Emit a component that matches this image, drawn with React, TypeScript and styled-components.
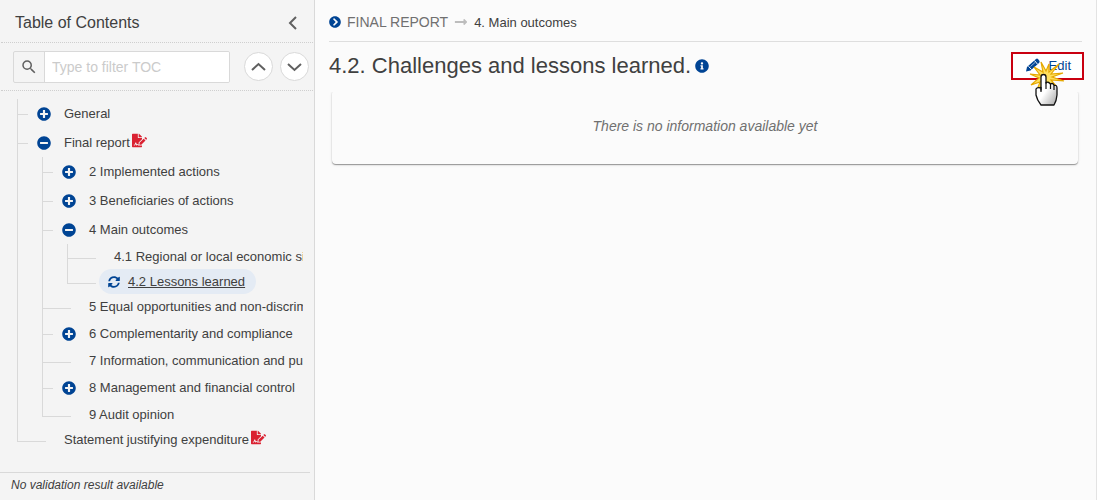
import React from "react";
import styled, { createGlobalStyle, css } from "styled-components";
import {
  FaChevronCircleRight,
  FaFileSignature,
  FaInfoCircle,
  FaLongArrowAltRight,
  FaMinusCircle,
  FaPlusCircle,
  FaSyncAlt,
} from "react-icons/fa";
import { MdSearch } from "react-icons/md";

const BLUE = "#004494";
const LINE = "#d9d9d9";

const GlobalStyle = createGlobalStyle`
  *, *::before, *::after { box-sizing: border-box; }
  body {
    margin: 0;
    background: #fbfbfb;
    color: #404040;
    font-family: "Liberation Sans", Arial, sans-serif;
    font-size: 13px;
  }
  button, input { font: inherit; color: inherit; }
  h1, h2, p, ul { margin: 0; padding: 0; font-weight: 400; }
  a { color: inherit; text-decoration: none; }
`;

const Page = styled.div`
  display: flex;
  min-height: 100vh;
  border-right: 1px solid #e3e3e3;
`;

const Sidebar = styled.aside`
  display: flex;
  flex-direction: column;
  flex: 0 0 315px;
  min-width: 0;
  background: #f4f4f4;
  border-right: 1px solid ${LINE};
`;

const SidebarHeader = styled.header`
  display: flex;
  align-items: center;
  justify-content: space-between;
  height: 43px;
  margin: 0 1px;
  padding: 4px 16px 0 14px;
  border-bottom: 1px dotted #cfcfcf;
`;

const SidebarTitle = styled.h2`
  font-size: 16px;
  line-height: 20px;
`;

const PlainButton = styled.button`
  display: flex;
  padding: 0;
  border: 0;
  background: none;
`;

const FilterBar = styled.form`
  display: flex;
  align-items: center;
  gap: 7px;
  height: 48px;
  margin: 0 1px;
  padding: 0 4px 0 12px;
  border-bottom: 1px dotted #cfcfcf;
`;

const SearchBox = styled.label`
  display: flex;
  flex: 1;
  min-width: 0;
  height: 32px;
  margin-right: 7px;
  border: 1px solid ${LINE};
  border-radius: 2px;
  overflow: hidden;
`;

const SearchIcon = styled.span`
  display: flex;
  align-items: center;
  justify-content: center;
  flex: 0 0 31px;
  border-right: 1px solid ${LINE};
  color: #606060;
`;

const SearchInput = styled.input`
  flex: 1;
  min-width: 0;
  padding: 0 7px;
  border: 0;
  background: #fff;
  font-size: 14px;
  &::placeholder { color: #cbcbcb; }
`;

const RoundButton = styled.button`
  display: flex;
  align-items: center;
  justify-content: center;
  flex: 0 0 29px;
  height: 29px;
  padding: 0;
  border: 1px solid ${LINE};
  border-radius: 50%;
  background: #fff;
`;

const TreeArea = styled.nav`
  flex: 1;
  margin-right: 11px;
  padding: 8px 0 0 17px;
  overflow: hidden;
`;

const TreeList = styled.ul<{ $nested?: boolean }>`
  list-style: none;
  margin-left: ${(p) => (p.$nested ? 24 : 0)}px;
`;

const TreeItem = styled.li`
  display: flex;
`;

const Rail = styled.span<{ $end?: number }>`
  flex: 0 0 1px;
  background: ${LINE};
  ${(p) => p.$end && css`height: ${p.$end}px;`}
`;

const ItemBody = styled.div`
  flex: 1;
  min-width: 0;
`;

const Row = styled.div<{ $leaf: boolean }>`
  display: flex;
  align-items: center;
  height: ${(p) => (p.$leaf ? 25 : 29)}px;
  white-space: nowrap;
`;

const Tick = styled.span<{ $leaf: boolean; $active: boolean }>`
  align-self: flex-start;
  flex: 0 0 ${(p) => (p.$leaf ? 28 : 10)}px;
  height: 1px;
  margin-top: ${(p) => (p.$leaf ? 14 : 15)}px;
  margin-right: ${(p) => (p.$active ? 3 : p.$leaf ? 18 : 9)}px;
  background: ${LINE};
`;

const Toggle = styled(PlainButton)`
  flex: 0 0 14px;
  margin: 1px 13px 0 0;
  color: ${BLUE};
`;

const ItemLink = styled.a<{ $active?: boolean }>`
  display: flex;
  align-items: center;
  line-height: 18px;
  ${(p) =>
    p.$active &&
    css`
      gap: 8px;
      height: 25px;
      padding: 0 11px 0 9px;
      border-radius: 13px;
      background: #e4ebf4;
      svg { color: ${BLUE}; }
      span { text-decoration: underline; }
    `}
`;

const SignMark = styled(FaFileSignature)`
  margin: 0 0 4px 2px;
  color: #da2131;
`;

const SidebarFooter = styled.footer`
  height: 28px;
  margin-right: 4px;
  padding: 0 11px;
  border-top: 1px solid ${LINE};
  font-size: 12px;
  font-style: italic;
  line-height: 25px;
`;

const Main = styled.main`
  flex: 1;
  min-width: 0;
  padding: 0 14px;
`;

const Breadcrumb = styled.nav`
  display: flex;
  align-items: center;
  gap: 6px;
  height: 42px;
  padding-top: 3px;
  border-bottom: 1px solid #dedede;
`;

const CrumbLink = styled.a`
  color: #707070;
  font-size: 14px;
`;

const TitleBar = styled.div`
  display: flex;
  align-items: center;
  justify-content: space-between;
  height: 48px;
  margin-right: -2px;
`;

const Title = styled.h1`
  display: flex;
  align-items: center;
  gap: 4px;
  font-size: 22px;
  line-height: 28px;
`;

const EditWrap = styled.div`
  position: relative;
`;

const EditButton = styled.button`
  display: flex;
  align-items: center;
  gap: 9px;
  height: 28px;
  padding: 0 11px 2px 13px;
  border: 2px solid #c90010;
  background: #fff;
  color: ${BLUE};
`;

const Pointer = styled.svg`
  position: absolute;
  left: 18px;
  top: 9px;
  pointer-events: none;
`;

const Card = styled.section`
  display: flex;
  align-items: center;
  justify-content: center;
  height: 74px;
  margin: 0 4px 0 3px;
  padding-bottom: 2px;
  border-radius: 4px;
  box-shadow: 0 1px 1px rgba(0, 0, 0, 0.35), 0 1px 3px rgba(0, 0, 0, 0.12);
  clip-path: inset(2px -4px -4px -4px);
`;

const EmptyNote = styled.p`
  color: #707070;
  font-size: 14px;
  font-style: italic;
`;

function Chevron({ d, width, height }: { d: string; width: number; height: number }) {
  return (
    <svg width={width} height={height} viewBox={`0 0 ${width} ${height}`} fill="none" stroke="#606060" strokeWidth="2" aria-hidden="true">
      <path d={d} />
    </svg>
  );
}

interface Node {
  label: string;
  children?: Node[];
  collapsed?: boolean;
  signed?: boolean;
  active?: boolean;
}

const toc: Node[] = [
  { label: "General", collapsed: true },
  {
    label: "Final report",
    signed: true,
    children: [
      { label: "2 Implemented actions", collapsed: true },
      { label: "3 Beneficiaries of actions", collapsed: true },
      {
        label: "4 Main outcomes",
        children: [
          { label: "4.1 Regional or local economic situation" },
          { label: "4.2 Lessons learned", active: true },
        ],
      },
      { label: "5 Equal opportunities and non-discrimination" },
      { label: "6 Complementarity and compliance", collapsed: true },
      { label: "7 Information, communication and publicity" },
      { label: "8 Management and financial control", collapsed: true },
      { label: "9 Audit opinion" },
    ],
  },
  { label: "Statement justifying expenditure", signed: true },
];

function Tree({ nodes, nested }: { nodes: Node[]; nested?: boolean }) {
  return (
    <TreeList $nested={nested}>
      {nodes.map((node, i) => {
        const leaf = !node.children && !node.collapsed;
        const last = i === nodes.length - 1;
        return (
          <TreeItem key={node.label}>
            <Rail $end={last ? 15 : undefined} />
            <ItemBody>
              <Row $leaf={leaf}>
                <Tick $leaf={leaf} $active={!!node.active} />
                {!leaf && (
                  <Toggle type="button" aria-label={(node.collapsed ? "Expand " : "Collapse ") + node.label}>
                    {node.collapsed ? <FaPlusCircle size={14} /> : <FaMinusCircle size={14} />}
                  </Toggle>
                )}
                <ItemLink href="#" $active={node.active}>
                  {node.active && <FaSyncAlt size={12} />}
                  <span>{node.label}</span>
                  {node.signed && <SignMark size={15} />}
                </ItemLink>
              </Row>
              {node.children && <Tree nodes={node.children} nested />}
            </ItemBody>
          </TreeItem>
        );
      })}
    </TreeList>
  );
}

function Pencil() {
  return (
    <svg width="14" height="14" viewBox="0 0 14 14" aria-hidden="true">
      <path d="M0 13.500 L1 9 L10 1 Q11 0 12 1 L13.500 3 Q14 4 13 5 L4.500 12.500 Z" fill={BLUE} />
      <path d="M8.500 2.500 L11.500 6.200 M2.500 8.300 L5.500 11.500" stroke="#fff" strokeWidth="1" />
      <path d="M4.500 8.500 L9 4.500" stroke="#8fb0d8" strokeWidth="1" />
    </svg>
  );
}

function ClickPointer() {
  return (
    <Pointer width="40" height="46" viewBox="0 0 40 46" aria-hidden="true">
      <defs>
        <linearGradient id="hand" x1="0" y1="0" x2="1" y2="1">
          <stop offset="0.5" stopColor="#fff" />
          <stop offset="1" stopColor="#a4a4a4" />
        </linearGradient>
      </defs>
      <path
        d="M14 11 L12 1 L17 10 L20 3 L20 11 L30 3 L22 13 L34 12 L23 16 L35 20 L22 19 L27 25 L17 21 L8 29 L11 21 L2 24 L10 17 L1 13 L11 14 L5 6 Z"
        fill="#ffdf5c"
        stroke="#e5a800"
        strokeWidth="1.2"
      />
      <path
        d="M12 29 V16 Q12 13.500 14.500 13.500 Q17 13.500 17 16 V22 Q19 20 21.500 23 Q24 21.500 25 24.500 Q28 23.500 28 27 V34 Q27.500 40 25 44 H12 Q8 39 7 34 V28 Q8 26 12 27 Z"
        fill="url(#hand)"
        stroke="#111"
        strokeWidth="1.3"
        strokeLinejoin="round"
      />
      <path d="M12 26 V31 M17 21 V28 M21.500 23 V28 M25 25 V29" stroke="#111" strokeWidth="1.2" />
    </Pointer>
  );
}

export default function App() {
  return (
    <>
      <GlobalStyle />
      <Page>
        <Sidebar>
          <SidebarHeader>
            <SidebarTitle>Table of Contents</SidebarTitle>
            <PlainButton type="button" aria-label="Hide table of contents">
              <Chevron width={9} height={14} d="M8 1 L2 7 L8 13" />
            </PlainButton>
          </SidebarHeader>
          <FilterBar>
            <SearchBox>
              <SearchIcon>
                <MdSearch size={18} />
              </SearchIcon>
              <SearchInput type="text" placeholder="Type to filter TOC" aria-label="Filter table of contents" />
            </SearchBox>
            <RoundButton type="button" aria-label="Previous match">
              <Chevron width={15} height={10} d="M1 8 L7.500 2 L14 8" />
            </RoundButton>
            <RoundButton type="button" aria-label="Next match">
              <Chevron width={15} height={10} d="M1 2 L7.500 8 L14 2" />
            </RoundButton>
          </FilterBar>
          <TreeArea aria-label="Table of contents">
            <Tree nodes={toc} />
          </TreeArea>
          <SidebarFooter>No validation result available</SidebarFooter>
        </Sidebar>
        <Main>
          <Breadcrumb aria-label="Breadcrumb">
            <FaChevronCircleRight size={12} color={BLUE} />
            <CrumbLink href="#">FINAL REPORT</CrumbLink>
            <FaLongArrowAltRight size={14} color="#bdbdbd" />
            <span>4. Main outcomes</span>
          </Breadcrumb>
          <TitleBar>
            <Title>
              4.2. Challenges and lessons learned.
              <FaInfoCircle size={14} color={BLUE} />
            </Title>
            <EditWrap>
              <EditButton type="button">
                <Pencil />
                Edit
              </EditButton>
              <ClickPointer />
            </EditWrap>
          </TitleBar>
          <Card>
            <EmptyNote>There is no information available yet</EmptyNote>
          </Card>
        </Main>
      </Page>
    </>
  );
}
